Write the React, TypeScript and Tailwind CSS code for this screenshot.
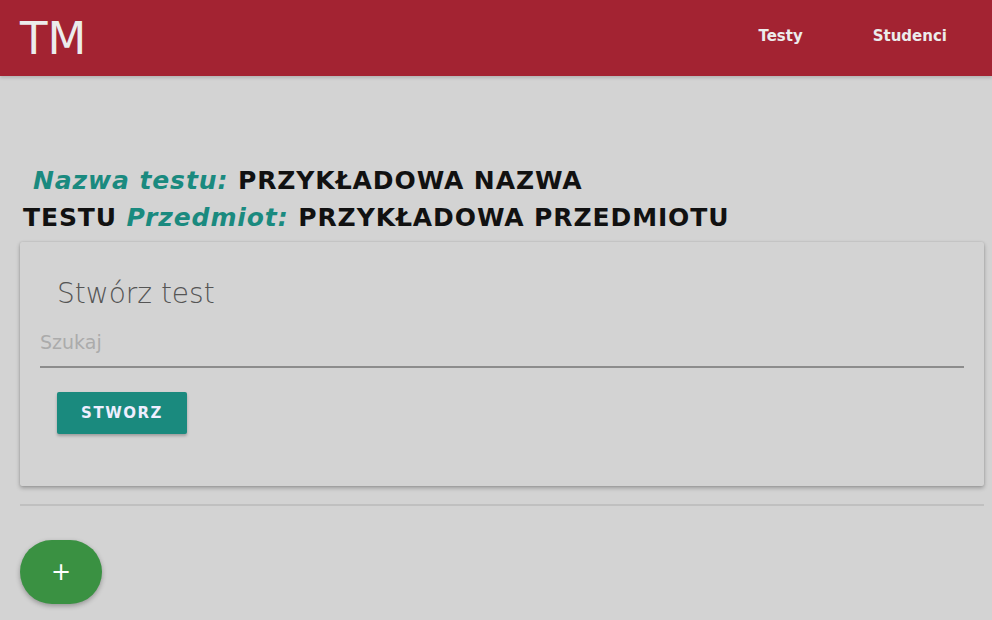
import React from "react";

export default function App() {
  const font = { fontFamily: '"DejaVu Sans", "Liberation Sans", sans-serif' };
  return (
    <div className="min-h-[620px] w-full bg-[#d3d3d3]" style={font}>
      <header className="flex h-[76px] items-center justify-between bg-[#a32332] pl-[20px] pr-[45px] shadow-[0_2px_3px_rgba(0,0,0,0.15)]">
        <div className="text-[45px] leading-none text-[#ececec]">TM</div>
        <nav className="flex items-center gap-[70px] pb-[4px] text-[15px] font-bold text-[#ececec]">
          <span>Testy</span>
          <span>Studenci</span>
        </nav>
      </header>

      <div className="px-[23px] pt-[86px] text-[25px] font-bold leading-[37px] tracking-[0.9px] text-[#111]">
        <div className="pl-[10px]">
          <span className="italic text-[#1a8a7f]">Nazwa testu:</span> PRZYKŁADOWA NAZWA
        </div>
        <div>
          TESTU <span className="italic text-[#1a8a7f]">Przedmiot:</span> PRZYKŁADOWA PRZEDMIOTU
        </div>
      </div>

      <div className="ml-[20px] mr-[8px] mt-[6px] rounded-[2px] bg-[#d3d3d3] px-[20px] pb-[52px] pt-[34px] shadow-[0_2px_4px_rgba(0,0,0,0.28),0_0_2px_rgba(0,0,0,0.12)]">
        <div className="pl-[17px] text-[28px] font-light leading-[36px] text-[#555]">Stwórz test</div>
        <div className="mt-[16px] border-b-[2px] border-[#8c8c8c] pb-[10px] text-[19px] leading-[28px] text-[#ababab]">
          Szukaj
        </div>
        <div className="mt-[24px] pl-[17px]">
          <button className="h-[42px] w-[130px] rounded-[2px] bg-[#1a8a7e] text-[15px] font-bold tracking-[1.5px] text-[#eef] shadow-[0_2px_3px_rgba(0,0,0,0.25)]">
            STWORZ
          </button>
        </div>
      </div>

      <div className="ml-[20px] mr-[8px] mt-[18px] h-[2px] bg-[#c0c0c0]" />

      <div className="px-[20px] pt-[34px] pb-[16px]">
        <button className="flex h-[64px] w-[82px] items-center justify-center rounded-full bg-[#3a9142] text-[24px] leading-none text-white shadow-[0_2px_5px_rgba(0,0,0,0.3)]">
          +
        </button>
      </div>
    </div>
  );
}
